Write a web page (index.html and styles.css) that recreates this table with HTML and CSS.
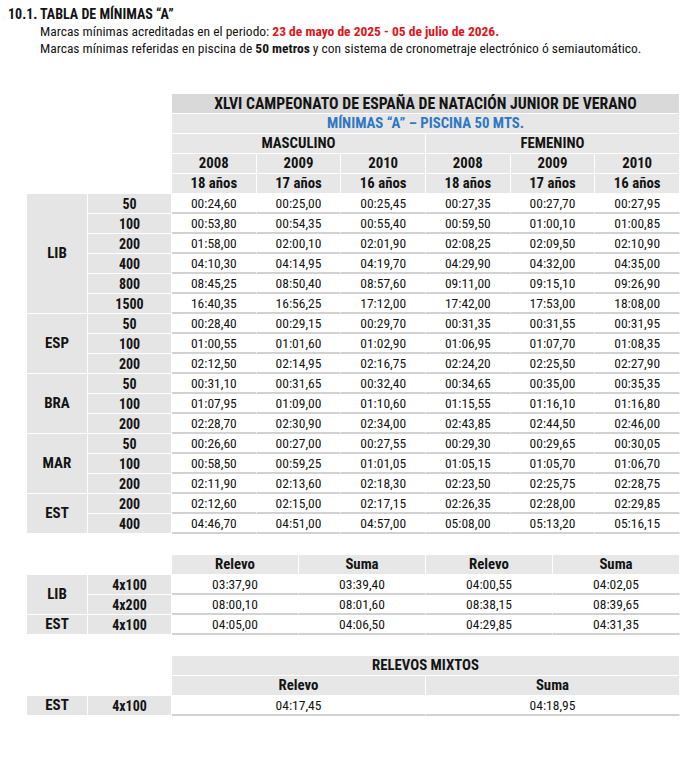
FILE: index.html
```html
<!DOCTYPE html>
<html lang="es">
<head>
<meta charset="utf-8">
<title>Tabla de mínimas A</title>
<link rel="stylesheet" href="styles.css">
</head>
<body>
<div class="intro">
  <h1 class="heading"><span class="num">10.1.</span><span>TABLA DE MÍNIMAS “A”</span></h1>
  <p class="line">Marcas mínimas acreditadas en el periodo: <strong class="red">23 de mayo de 2025 - 05 de julio de 2026.</strong></p>
  <p class="line">Marcas mínimas referidas en piscina de <strong>50 metros</strong> y con sistema de cronometraje electrónico ó semiautomático.</p>
</div>

<div class="grid main">
  <div class="blank hspan2 vspan5"></div>
  <div class="h title span6">XLVI CAMPEONATO DE ESPAÑA DE NATACIÓN JUNIOR DE VERANO</div>
  <div class="h blue span6">MÍNIMAS “A” – PISCINA 50 MTS.</div>
  <div class="h span3">MASCULINO</div>
  <div class="h span3">FEMENINO</div>
  <div class="h">2008</div><div class="h">2009</div><div class="h">2010</div>
  <div class="h">2008</div><div class="h">2009</div><div class="h">2010</div>
  <div class="h">18 años</div><div class="h">17 años</div><div class="h">16 años</div>
  <div class="h">18 años</div><div class="h">17 años</div><div class="h">16 años</div>

  <div class="g vspan6">LIB</div>
  <div class="e">50</div><div class="d">00:24,60</div><div class="d">00:25,00</div><div class="d">00:25,45</div><div class="d">00:27,35</div><div class="d">00:27,70</div><div class="d">00:27,95</div>
  <div class="e">100</div><div class="d">00:53,80</div><div class="d">00:54,35</div><div class="d">00:55,40</div><div class="d">00:59,50</div><div class="d">01:00,10</div><div class="d">01:00,85</div>
  <div class="e">200</div><div class="d">01:58,00</div><div class="d">02:00,10</div><div class="d">02:01,90</div><div class="d">02:08,25</div><div class="d">02:09,50</div><div class="d">02:10,90</div>
  <div class="e">400</div><div class="d">04:10,30</div><div class="d">04:14,95</div><div class="d">04:19,70</div><div class="d">04:29,90</div><div class="d">04:32,00</div><div class="d">04:35,00</div>
  <div class="e">800</div><div class="d">08:45,25</div><div class="d">08:50,40</div><div class="d">08:57,60</div><div class="d">09:11,00</div><div class="d">09:15,10</div><div class="d">09:26,90</div>
  <div class="e">1500</div><div class="d">16:40,35</div><div class="d">16:56,25</div><div class="d">17:12,00</div><div class="d">17:42,00</div><div class="d">17:53,00</div><div class="d">18:08,00</div>

  <div class="g vspan3">ESP</div>
  <div class="e">50</div><div class="d">00:28,40</div><div class="d">00:29,15</div><div class="d">00:29,70</div><div class="d">00:31,35</div><div class="d">00:31,55</div><div class="d">00:31,95</div>
  <div class="e">100</div><div class="d">01:00,55</div><div class="d">01:01,60</div><div class="d">01:02,90</div><div class="d">01:06,95</div><div class="d">01:07,70</div><div class="d">01:08,35</div>
  <div class="e">200</div><div class="d">02:12,50</div><div class="d">02:14,95</div><div class="d">02:16,75</div><div class="d">02:24,20</div><div class="d">02:25,50</div><div class="d">02:27,90</div>

  <div class="g vspan3">BRA</div>
  <div class="e">50</div><div class="d">00:31,10</div><div class="d">00:31,65</div><div class="d">00:32,40</div><div class="d">00:34,65</div><div class="d">00:35,00</div><div class="d">00:35,35</div>
  <div class="e">100</div><div class="d">01:07,95</div><div class="d">01:09,00</div><div class="d">01:10,60</div><div class="d">01:15,55</div><div class="d">01:16,10</div><div class="d">01:16,80</div>
  <div class="e">200</div><div class="d">02:28,70</div><div class="d">02:30,90</div><div class="d">02:34,00</div><div class="d">02:43,85</div><div class="d">02:44,50</div><div class="d">02:46,00</div>

  <div class="g vspan3">MAR</div>
  <div class="e">50</div><div class="d">00:26,60</div><div class="d">00:27,00</div><div class="d">00:27,55</div><div class="d">00:29,30</div><div class="d">00:29,65</div><div class="d">00:30,05</div>
  <div class="e">100</div><div class="d">00:58,50</div><div class="d">00:59,25</div><div class="d">01:01,05</div><div class="d">01:05,15</div><div class="d">01:05,70</div><div class="d">01:06,70</div>
  <div class="e">200</div><div class="d">02:11,90</div><div class="d">02:13,60</div><div class="d">02:18,30</div><div class="d">02:23,50</div><div class="d">02:25,75</div><div class="d">02:28,75</div>

  <div class="g vspan2">EST</div>
  <div class="e">200</div><div class="d">02:12,60</div><div class="d">02:15,00</div><div class="d">02:17,15</div><div class="d">02:26,35</div><div class="d">02:28,00</div><div class="d">02:29,85</div>
  <div class="e">400</div><div class="d">04:46,70</div><div class="d">04:51,00</div><div class="d">04:57,00</div><div class="d">05:08,00</div><div class="d">05:13,20</div><div class="d">05:16,15</div>
</div>

<div class="grid relay">
  <div class="blank hspan2"></div>
  <div class="h">Relevo</div><div class="h">Suma</div><div class="h">Relevo</div><div class="h">Suma</div>
  <div class="g vspan2">LIB</div>
  <div class="e">4x100</div><div class="d">03:37,90</div><div class="d">03:39,40</div><div class="d">04:00,55</div><div class="d">04:02,05</div>
  <div class="e">4x200</div><div class="d">08:00,10</div><div class="d">08:01,60</div><div class="d">08:38,15</div><div class="d">08:39,65</div>
  <div class="g">EST</div>
  <div class="e">4x100</div><div class="d">04:05,00</div><div class="d">04:06,50</div><div class="d">04:29,85</div><div class="d">04:31,35</div>
</div>

<div class="grid mixed">
  <div class="blank hspan2 vspan2"></div>
  <div class="h span2">RELEVOS MIXTOS</div>
  <div class="h">Relevo</div><div class="h">Suma</div>
  <div class="g">EST</div>
  <div class="e">4x100</div><div class="d">04:17,45</div><div class="d">04:18,95</div>
</div>
</body>
</html>
```

FILE: styles.css
```css
* { box-sizing: border-box; }

html, body {
  margin: 0;
  padding: 0;
  background: #ffffff;
}

body {
  font-family: Roboto, "Liberation Sans", Arial, sans-serif;
  font-stretch: condensed;
  font-size: 13px;
  color: #141414;
}

.intro {
  padding: 6px 0 0 8px;
}

.heading {
  display: flex;
  margin: 0;
  font-size: 14px;
  font-stretch: 85%;
  font-weight: bold;
  line-height: 17px;
}

.num {
  flex: 0 0 32px;
}

.line {
  margin: 0 0 0 32px;
  font-size: 13.5px;
  line-height: 17px;
}

.red {
  color: #e0131a;
}

.grid {
  display: grid;
  margin-left: 27px;
  width: 653px;
  grid-auto-rows: 20px;
}

.main {
  margin-top: 37px;
  grid-template-columns: 61px 84px repeat(6, 1fr);
}

.relay {
  margin-top: 21px;
  grid-template-columns: 61px 84px repeat(4, 1fr);
}

.mixed {
  margin-top: 21px;
  grid-template-columns: 61px 84px repeat(2, 1fr);
}

.grid > div {
  display: flex;
  align-items: center;
  justify-content: center;
  white-space: nowrap;
  line-height: 1;
}

.blank { background: #ffffff; }

.hspan2 { grid-column: span 2; }
.vspan2 { grid-row: span 2; }
.vspan3 { grid-row: span 3; }
.vspan5 { grid-row: span 5; }
.vspan6 { grid-row: span 6; }
.span2 { grid-column: span 2; }
.span3 { grid-column: span 3; }
.span6 { grid-column: span 6; }

.h {
  background: #e7e7e7;
  font-weight: bold;
  font-size: 14.8px;
  border-right: 1px solid #ffffff;
  border-bottom: 1px solid #ffffff;
}

.title {
  background: #d9d9d9;
  font-size: 15.75px;
}

.blue {
  color: #2e77c4;
}

.g, .e {
  background: #e5e5e5;
  font-weight: bold;
  font-size: 15px;
  border-right: 1px solid #ffffff;
  border-bottom: 1px solid #ffffff;
}

.e {
  font-size: 14px;
}

.d {
  background: #ffffff;
  font-size: 13.5px;
  border-right: 1px solid #ffffff;
  border-bottom: 2px solid #d2d2d2;
  padding-top: 2px;
}
```
